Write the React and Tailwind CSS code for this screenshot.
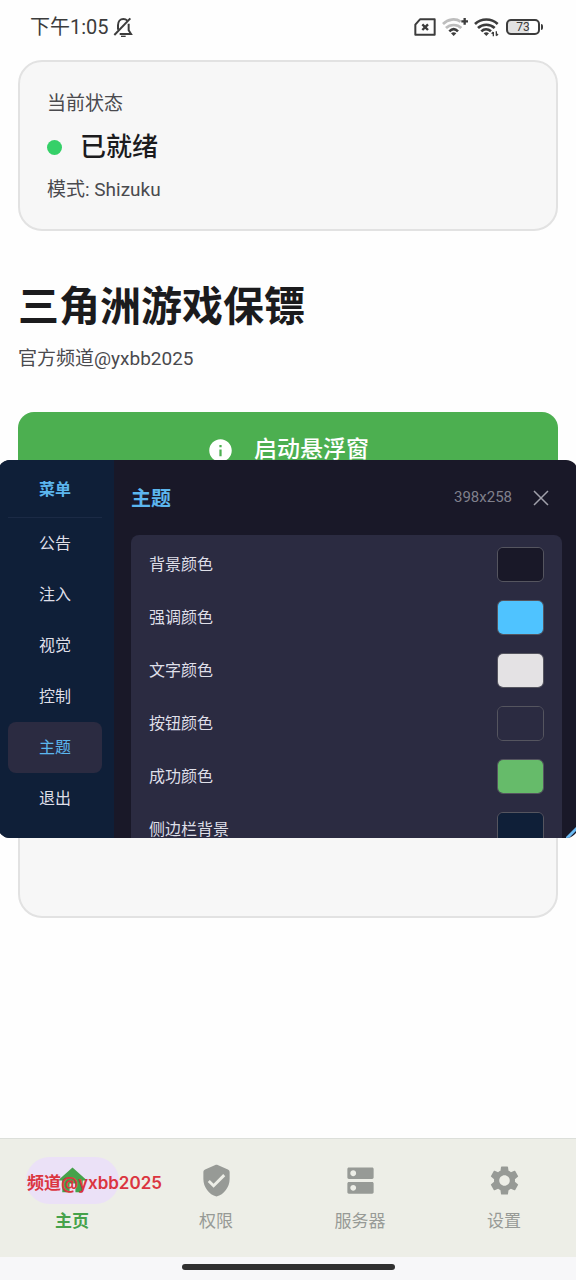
import React, { useState } from 'react';
import { MdDns, MdHome, MdInfo, MdSettings } from 'react-icons/md';

const menuItems = ['公告', '注入', '视觉', '控制', '主题', '退出'];

const themeColors = [
    { id: 'background', label: '背景颜色', value: '#191828' },
    { id: 'accent', label: '强调颜色', value: '#4fc3ff' },
    { id: 'text', label: '文字颜色', value: '#e4e2e4' },
    { id: 'button', label: '按钮颜色', value: '#2b2b41' },
    { id: 'success', label: '成功颜色', value: '#66bb6a' },
    { id: 'sidebar', label: '侧边栏背景', value: '#0f1f38' },
];

const ShieldIcon = ({ className }) => (
    <svg viewBox="0 0 24 24" fill="currentColor" className={className}>
        <path d="M11.19 1.36l-7 3.11C3.47 4.79 3 5.51 3 6.3V11c0 5.55 3.84 10.74 9 12 5.16-1.26 9-6.45 9-12V6.3c0-.79-.47-1.51-1.19-1.83l-7-3.11c-.51-.23-1.11-.23-1.62 0zM10 17l-4-4 1.41-1.41L10 14.17l6.59-6.59L18 9l-8 8z" />
    </svg>
);

const navItems = [
    { label: '主页', icon: MdHome },
    { label: '权限', icon: ShieldIcon },
    { label: '服务器', icon: MdDns },
    { label: '设置', icon: MdSettings },
];

const StatusBar = () => (
    <header className="flex h-[60px] items-start justify-between pl-[30px] pr-[33px] pt-3.5 text-[#3c3c3c]">
        <div className="flex items-center gap-1">
            <span className="text-[20px] leading-[26px]">下午1:05</span>
            <svg viewBox="0 0 60 60" className="size-5" fill="none" stroke="currentColor" strokeWidth="6">
                <path d="M15 38V25C15 13 22 6 31 6c6 0 9 2 12 5" />
                <path d="M47 20v20l7 11H20" />
                <path d="M4 54L52 4" />
                <path d="M24 58h14" strokeWidth="4" />
            </svg>
        </div>
        <div className="flex h-[26px] items-center gap-1.5">
            <svg viewBox="0 0 66 54" className="h-[18px] w-[22px]" fill="none" stroke="currentColor" strokeWidth="6">
                <path d="M18 4h44v46H4V20z" strokeLinejoin="round" />
                <path d="M25 19l17 17M42 19L25 36" strokeWidth="7" />
            </svg>
            <svg viewBox="0 0 78 60" className="h-5 w-[26px]" fill="none" stroke="currentColor" strokeWidth="8">
                <path d="M3 21c15-15 37-18 53-7" stroke="#bdbdbd" />
                <path d="M12 33c12-12 34-12 46 0" stroke="#bdbdbd" />
                <path d="M22 43c8-8 18-8 26 0" />
                <path d="M27 49c5-4 11-4 16 0l-8 8z" fill="currentColor" stroke="none" />
                <path d="M68 3v20M58 13h20" strokeWidth="7" />
            </svg>
            <svg viewBox="0 0 78 60" className="h-5 w-[26px]" fill="none" stroke="currentColor" strokeWidth="8">
                <path d="M3 21c19-18 49-18 68 0" />
                <path d="M12 33c14-13 36-13 50 0" />
                <path d="M22 43c8-8 20-8 29 0" />
                <path d="M29 49c5-4 11-4 16 0l-8 8z" fill="currentColor" stroke="none" />
                <path d="M58 45v13M58 45l-5 5M67 43v13M67 56l5-5" strokeWidth="4" />
            </svg>
            <div className="flex items-center gap-px">
                <span className="flex h-4 w-[34px] items-center justify-center rounded-[5px] border-2 border-current bg-linear-to-r from-[#e2e2e2] from-70% to-white to-70% text-[12px] leading-3">73</span>
                <span className="h-1.5 w-0.5 rounded-r bg-current" />
            </div>
        </div>
    </header>
);

const FloatingMenu = () => {
    const [active, setActive] = useState('主题');
    const [colors, setColors] = useState(themeColors);

    const changeColor = (id, value) => {
        setColors(colors.map((c) => (c.id === id ? { ...c, value } : c)));
    };

    return (
        <section className="absolute -inset-x-0.5 top-[460px] flex h-[378px] overflow-hidden rounded-xl bg-[#191828] text-[#dfdfe8]">
            <aside className="w-[116px] shrink-0 bg-[#0f1f38] pl-2.5 pr-3 text-center text-[16px]">
                <h2 className="h-[58px] border-b border-[#1b2a45] pt-[18px] font-bold leading-6 text-[#5cb6ee]">菜单</h2>
                {menuItems.map((item) => (
                    <button
                        key={item}
                        onClick={() => setActive(item)}
                        className={`block h-[51px] w-full rounded-lg ${active === item ? 'bg-[#2b2b41] text-[#5cb6ee]' : ''}`}
                    >
                        {item}
                    </button>
                ))}
            </aside>

            <div className="min-w-0 flex-1 pl-[17px] pr-4">
                <div className="flex h-[75px] items-center pr-3">
                    <h2 className="flex-1 pt-0.5 text-[20px] font-bold text-[#5cb6ee]">{active}</h2>
                    <span className="text-[15px] text-[#80808c]">398x258</span>
                    <button aria-label="关闭" className="ml-5 text-[#a0a0aa]">
                        <svg viewBox="0 0 18 18" className="size-[18px]" fill="none" stroke="currentColor" strokeWidth="1.5">
                            <path d="M2 2l14 14M16 2L2 16" />
                        </svg>
                    </button>
                </div>
                <div className="rounded-lg bg-[#2b2b41] px-[18px] pt-[3px]">
                    {colors.map((c) => (
                        <div key={c.id} className="flex h-[53px] items-center justify-between">
                            <label htmlFor={c.id} className="text-[16px]">{c.label}</label>
                            <input
                                id={c.id}
                                type="color"
                                value={c.value}
                                onChange={(e) => changeColor(c.id, e.target.value)}
                                className="h-[35px] w-[47px] appearance-none overflow-hidden rounded-md border border-[#55555f] p-0 [&::-webkit-color-swatch-wrapper]:p-0 [&::-webkit-color-swatch]:rounded-none [&::-webkit-color-swatch]:border-0"
                            />
                        </div>
                    ))}
                </div>
            </div>

            {/* resize handle */}
            <svg viewBox="0 0 12 12" className="absolute bottom-0 right-0 size-3" stroke="#6cbcf5" strokeWidth="3">
                <path d="M0 13L13 0" />
            </svg>
        </section>
    );
};

const BottomNav = () => {
    const [current, setCurrent] = useState('主页');

    return (
        <footer className="relative">
            <nav className="grid h-[119px] grid-cols-4 border-t border-[#dcdfda] bg-[#edeee7] pt-[18px]">
                {navItems.map(({ label, icon: Icon }) => {
                    const selected = current === label;
                    return (
                        <button
                            key={label}
                            onClick={() => setCurrent(label)}
                            className={`flex flex-col items-center gap-[5px] text-[17px] leading-6 ${selected ? 'font-bold text-[#46a24b]' : 'text-[#979a96]'}`}
                        >
                            <span className={`flex h-[47px] w-[93px] items-center justify-center rounded-full ${selected ? 'bg-[#ebe1f7]' : ''}`}>
                                <Icon className="size-[35px]" />
                            </span>
                            {label}
                        </button>
                    );
                })}
            </nav>
            <p className="pointer-events-none absolute left-[27px] top-[33px] font-[Inter,'Noto_Sans_CJK_SC',sans-serif] text-[17px] font-semibold leading-6 text-[#db3540]">频道@yxbb2025</p>
            <div className="flex h-[23px] justify-center bg-[#f7f7f9] pt-[7px]">
                <span className="h-1.5 w-[213px] rounded-full bg-[#303030]" />
            </div>
        </footer>
    );
};

const App = () => {
    return (
        <div className="relative flex min-h-screen flex-col overflow-hidden bg-[#fefefe] font-[Roboto,'Noto_Sans_CJK_SC',sans-serif] text-[#1b1b1d]">
            <StatusBar />

            <main className="flex-1 px-[18px]">
                <section className="rounded-3xl border-2 border-[#e2e2e2] bg-[#f7f7f7] px-[27px] pb-[25px] pt-7">
                    <p className="text-[19px] leading-7 text-[#4a4a4e]">当前状态</p>
                    <div className="my-1 flex h-[50px] items-center gap-[18px]">
                        <span className="size-[15px] rounded-full bg-[#35d068]" />
                        <strong className="text-[26px] font-medium leading-9">已就绪</strong>
                    </div>
                    <p className="text-[19px] leading-7 text-[#4a4a4e]">模式: Shizuku</p>
                </section>

                <h1 className="mt-[46px] text-[41px] font-bold leading-[60px]">三角洲游戏保镖</h1>
                <p className="mt-2 text-[19px] leading-7 text-[#4a4a4e]">官方频道@yxbb2025</p>

                <button className="mt-[39px] flex h-[76px] w-full items-center justify-center gap-5 rounded-2xl bg-[#4caf50] text-[23px] font-medium text-white">
                    <MdInfo className="size-[27px]" />
                    启动悬浮窗
                </button>
                <section className="mt-6 h-[406px] rounded-3xl border-2 border-[#e2e2e2] bg-[#f7f7f7]" />
            </main>

            <FloatingMenu />
            <BottomNav />
        </div>
    );
};

export default App;
